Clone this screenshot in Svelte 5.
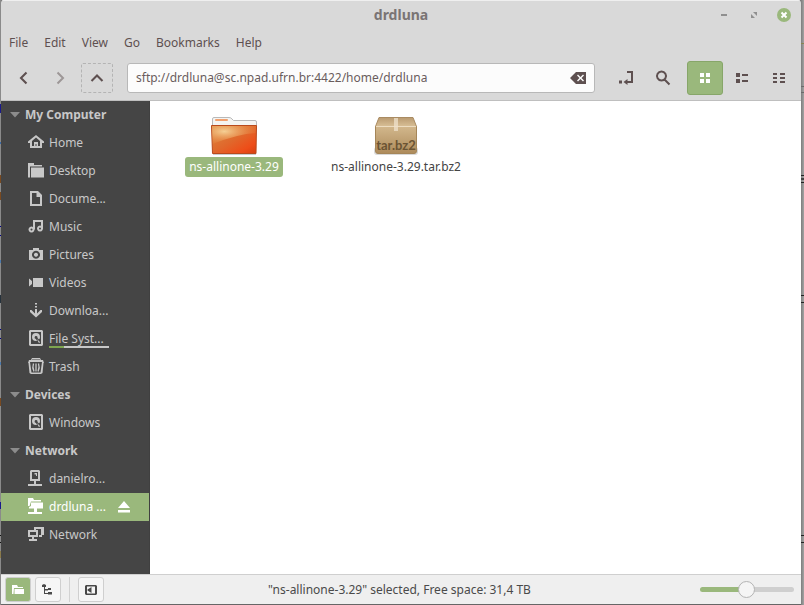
<script>
  const groups = [
    {
      title: 'My Computer',
      places: [
        { name: 'Home', icon: 'home' },
        { name: 'Desktop', icon: 'folder' },
        { name: 'Docume...', icon: 'document' },
        { name: 'Music', icon: 'music' },
        { name: 'Pictures', icon: 'camera' },
        { name: 'Videos', icon: 'video' },
        { name: 'Downloa...', icon: 'download' },
        { name: 'File Syst...', icon: 'disk', used: 25 },
        { name: 'Trash', icon: 'trash' }
      ]
    },
    { title: 'Devices', places: [{ name: 'Windows', icon: 'disk' }] },
    {
      title: 'Network',
      places: [
        { name: 'danielro...', icon: 'server' },
        { name: 'drdluna ...', icon: 'remote', mounted: true },
        { name: 'Network', icon: 'network' }
      ]
    }
  ];
  const menus = ['File', 'Edit', 'View', 'Go', 'Bookmarks', 'Help'];

  // Filled shapes (f) and stroked shapes (s) on a 16x16 grid
  const icons = {
    home: { f: 'M8 1 16 7.500V9H14V14H2V9H0V7.500ZM8 3.500 4 7V12H6V8H10V12H12V7ZM7.500 10H8.500V12H7.500Z' },
    folder: { f: 'M0 1H6V3H14V4.500H2V15.500H0ZM3 5.500H16V15.500H3Z' },
    document: { f: 'M2 1H10L14 5V16H2ZM4 3V14H12V7H8.500V3Z' },
    music: { s: 'M6 11.500V3H14V10.500M3.500 9.500A2 2 0 1 0 3.510 9.500ZM12 8.500A2 2 0 1 0 12.010 8.500Z', w: 2 },
    camera: { f: 'M5 2H11V4H15V14H1V4H5ZM8 4.800A4 4 0 1 0 8.010 4.800ZM8 6.800A2 2 0 1 1 7.990 6.800Z' },
    video: { f: 'M5 4H15V13H5ZM1 4.500 4 7V10L1 12.500Z' },
    download: { f: 'M7 1H9V2.500H7ZM7 4H9V5.500H7ZM7 7H9V11.500L12.500 8H14V10L8 15.500 2 10V8H3.500L7 11.500Z' },
    disk: { f: 'M2 0H14L15 1V15L14 16H2L1 15V1ZM3 2V14H13V2ZM8 3A4 4 0 0 1 12 7Q12 8.500 11 9.500L9.500 8A1.500 1.500 0 1 0 8 9L9 11H8A4 4 0 0 1 8 3ZM9 9 12 12 11.500 13 10.500 12.500Z' },
    trash: { f: 'M4 0H12L13 2H15L16 5H15.500L14.500 15 13 16H3L1.500 15 .5 5H0L1 2H3ZM2 4 3.500 14.500H12.500L14 4ZM4 1.500V2H12V1.500Z', s: 'M5.500 5.500Q4 9.500 6 13.500M8 5.500V13.500M10.500 5.500Q12 9.500 10 13.500', w: 1.3 },
    server: { f: 'M3 0H11L12 1V11H8V14H14V16H0V14H6V11H2V1ZM4 2V9H10V2ZM6.500 3H9V6H8V4.500H6.500Z' },
    remote: { f: 'M0 0H5L6 2H13V3.500H3L1.500 8H0ZM3 4.500H15V10.500H9V14H14V16H0V14H6V10.500H1V9L3 8Z' },
    network: { f: 'M6 1H16V9H14V11H11V9H13V3H8V4H6ZM0 4H10V11H6V13H9V15H1V13H4V11H0ZM2 6V9H8V6Z' },
    eject: { f: 'M8 2 14 9H2ZM2 11H14V13.500H2Z' },
    back: { s: 'M10.500 2.500 5 8 10.500 13.500', w: 2.100 },
    forward: { s: 'M5.500 2.500 11 8 5.500 13.500', w: 2 },
    up: { s: 'M2.500 11 8 5.500 13.500 11', w: 2.100 },
    clear: { f: 'M6 2H16V14H6L0 8ZM7 5.500 9.500 8 7 10.500 8 11.500 10.500 9 13 11.500 14 10.500 11.500 8 14 5.500 13 4.500 10.500 7 8 4.500Z' },
    toggle: { f: 'M9 1H15V13H9.500V15L5.500 12 9.500 9V11H13V3H9ZM1 10.500H4V13.500H1Z' },
    search: { s: 'M6.500 1.500A4.500 4.500 0 1 0 6.510 1.500ZM10 10 14.500 14.500', w: 2 },
    grid: { f: 'M3 3H7V7H3ZM9 3H13V7H9ZM3 9H7V13H3ZM9 9H13V13H9Z' },
    list: { f: 'M2 3H6V7H2ZM8 4H14V6H8ZM2 9H6V13H2ZM8 10H14V12H8Z' },
    compact: { f: 'M2 3H6V5H2ZM9 3H14V5H9ZM2 7H6V9H2ZM9 7H14V9H9ZM2 11H6V13H2ZM9 11H14V13H9Z' },
    places: { f: 'M2 3H7L8 5H13V6H4L3.500 12H2ZM4.500 7H14V12H4.500Z' },
    tree: { f: 'M2 3 4 2 6 3V5H5V7H8V6H11V8H8V8.500H5V11H8V10H12V12.500H8V12H4V5H2Z' },
    panel: { f: 'M3 3H13L14 4V12L13 13H3L2 12V4ZM4 4.500V11.500H12V4.500ZM8.500 5V11L4.500 8.500V7.500Z' },
    minimize: { f: 'M5 7H11V9H5Z' },
    maximize: { f: 'M7 5H11V9ZM5 7V11H9Z' }
  };

  // Glimpses of the page behind the window: offset, height, colour
  const leftSpecks = [
    [104, 9, '#1a1a8c'], [142, 2, '#3a6aa8'], [175, 8, '#7a4a20'], [192, 8, '#7a4a20'],
    [226, 1, '#00008c'], [235, 1, '#00008c'], [260, 3, '#4a7ab0'], [295, 8, '#26323c'],
    [329, 1, '#00008c'], [338, 1, '#00008c'], [362, 3, '#4a7ab0'], [398, 8, '#7a4a20'],
    [502, 7, '#1a1a8c'], [535, 1, '#111'], [542, 1, '#111'], [551, 7, '#8a7a4a']
  ];
  const rightSpecks = [
    [43, 1, '#8a8450'], [86, 1, '#6a6a6a'], [92, 1, '#6a6a6a'],
    [175, 1, '#222'], [178, 2, '#444'], [182, 1, '#222'],
    [295, 1, '#222'], [302, 1, '#222'], [535, 1, '#222'], [542, 1, '#222']
  ];
</script>

{#snippet icon(name)}
  <svg class="icon" viewBox="0 0 16 16" aria-hidden="true">
    {#if icons[name].f}<path d={icons[name].f} fill="currentColor" fill-rule="evenodd" />{/if}
    {#if icons[name].s}<path d={icons[name].s} fill="none" stroke="currentColor" stroke-width={icons[name].w} />{/if}
  </svg>
{/snippet}

{#snippet edge(side, specks)}
  <svg class="edge {side}" aria-hidden="true">
    {#each specks as [y, height, fill]}<rect x="0" {y} width="100%" {height} {fill} />{/each}
  </svg>
{/snippet}

<div class="backdrop">
  {@render edge('left', leftSpecks)}
  {@render edge('right', rightSpecks)}
  <div class="window">
    <header>
      <div class="titlebar">
        <h1>drdluna</h1>
        <div class="controls">
          <button aria-label="Minimize">{@render icon('minimize')}</button>
          <button aria-label="Maximize">{@render icon('maximize')}</button>
          <button aria-label="Close">
            <svg class="icon" viewBox="0 0 16 16"><circle cx="8" cy="8" r="7" fill="#9ab87c" /><path d="M5.500 5.500 10.500 10.500M10.500 5.500 5.500 10.500" stroke="#fff" stroke-width="2" /></svg>
          </button>
        </div>
      </div>
      <nav class="menubar">
        {#each menus as menu}<button>{menu}</button>{/each}
      </nav>
      <div class="toolbar">
        <div class="history">
          <button aria-label="Back">{@render icon('back')}</button>
          <button aria-label="Forward" disabled>{@render icon('forward')}</button>
          <button class="up" aria-label="Up">{@render icon('up')}</button>
        </div>
        <div class="location">
          <input type="text" aria-label="Location" value="sftp://drdluna@sc.npad.ufrn.br:4422/home/drdluna" />
          <button aria-label="Clear">{@render icon('clear')}</button>
        </div>
        <div class="tools">
          <button aria-label="Toggle location entry">{@render icon('toggle')}</button>
          <button aria-label="Search">{@render icon('search')}</button>
        </div>
        <div class="views">
          <button class="active" aria-label="Icon view">{@render icon('grid')}</button>
          <button aria-label="List view">{@render icon('list')}</button>
          <button aria-label="Compact view">{@render icon('compact')}</button>
        </div>
      </div>
    </header>

    <div class="body">
      <aside>
        {#each groups as group}
          <h2><svg viewBox="0 0 10 6" aria-hidden="true"><path d="M0 0H10L5 5.500Z" fill="#8c8c8c" /></svg>{group.title}</h2>
          <ul>
            {#each group.places as place}
              <li class:selected={place.mounted}>
                <a href="#place">{@render icon(place.icon)}<span>{place.name}</span></a>
                {#if place.mounted}<button aria-label="Eject">{@render icon('eject')}</button>{/if}
                {#if place.used}<div class="usage"><div style="width: {place.used}%"></div></div>{/if}
              </li>
            {/each}
          </ul>
        {/each}
      </aside>

      <main>
        <button class="file selected">
          <svg viewBox="0 0 48 40" aria-hidden="true">
            <defs>
              <linearGradient id="front" x1="0" y1="0" x2="1" y2="1"><stop offset="0" stop-color="#dc8a40" /><stop offset=".5" stop-color="#e0682c" /><stop offset=".8" stop-color="#ee4d18" /><stop offset="1" stop-color="#d5400f" /></linearGradient>
              <radialGradient id="shine" cx=".28" cy=".3" r=".8"><stop offset="0" stop-color="#f6d49a" stop-opacity=".95" /><stop offset="1" stop-color="#e88a40" stop-opacity=".1" /></radialGradient>
            </defs>
            <path d="M2.500 12V2Q2.500.5 4 .5H19Q21 .5 22 2L23.500 3.500H45Q46.500 3.500 46.500 5V12Z" fill="#f4f4f2" stroke="#b9b9b9" />
            <rect x="5" y="2" width="13" height="2" rx="1" fill="#f2a06e" />
            <path d="M1.500 8.500H46.500L46 36.500H2.500Z" fill="url(#front)" stroke="#b94a1c" />
            <path d="M2 9H46L45.500 16Q28 17 2.500 27Z" fill="url(#shine)" />
            <path d="M3 37.500H46" stroke="#000" stroke-opacity=".2" />
          </svg>
          <span>ns-allinone-3.29</span>
        </button>
        <button class="file">
          <svg viewBox="0 0 48 40" aria-hidden="true">
            <defs>
              <linearGradient id="box" x1="0" y1="0" x2="0" y2="1"><stop offset="0" stop-color="#d2b78c" /><stop offset="1" stop-color="#ad8b5b" /></linearGradient>
              <linearGradient id="lid" x1="0" y1="0" x2="0" y2="1"><stop offset="0" stop-color="#b99a70" /><stop offset="1" stop-color="#d8bf96" /></linearGradient>
            </defs>
            <rect x="2" y="30" width="44" height="8" rx="3" fill="#000" opacity=".15" />
            <path d="M7 .5H41L44.500 9.500H3.500Z" fill="url(#lid)" stroke="#a98b62" />
            <path d="M3.500 9.500H44.500V34Q44.500 36.500 42 36.500H6Q3.500 36.500 3.500 34Z" fill="url(#box)" stroke="#a58659" />
            <path d="M4 9.500H44" stroke="#eddcc0" />
            <path d="M22 1H26V14H22Z" fill="#efe2cc" opacity=".75" />
            <text x="24" y="33" text-anchor="middle">tar.bz2</text>
          </svg>
          <span>ns-allinone-3.29.tar.bz2</span>
        </button>
      </main>
    </div>

    <footer>
      <div class="panes">
        <button class="active" aria-label="Places">{@render icon('places')}</button>
        <button aria-label="Tree">{@render icon('tree')}</button>
        <i></i>
        <button aria-label="Hide sidebar">{@render icon('panel')}</button>
      </div>
      <p>"ns-allinone-3.29" selected, Free space: 31,4 TB</p>
      <div class="zoom"><input type="range" aria-label="Zoom" value="49" /></div>
    </footer>
  </div>
</div>

<style>
  :global(body) {
    margin: 0;
  }
  * {
    box-sizing: border-box;
  }
  .backdrop {
    position: relative;
    height: 100vh;
    padding: 0 3px 1px 1px;
    background: #666;
    font: 12px/16px 'Noto Sans', sans-serif;
    color: #4a4a4a;
  }
  .edge {
    position: absolute;
    top: 0;
    height: 100%;
  }
  .edge.left {
    left: 0;
    width: 1px;
    background: #8a8a8a;
  }
  .edge.right {
    right: 0;
    width: 3px;
    background: linear-gradient(to right, #7c7c7c, #a4a4a4);
  }
  .window {
    height: 100%;
    display: flex;
    flex-direction: column;
    border-radius: 3px 3px 0 0;
    overflow: hidden;
    background: #d9d9d9;
  }
  button {
    display: flex;
    align-items: center;
    justify-content: center;
    padding: 0;
    border: 0;
    background: none;
    font: inherit;
    color: inherit;
  }
  .icon {
    flex: none;
    display: block;
    width: 16px;
    height: 16px;
  }
  header {
    flex: none;
    border-top: 1px solid #efefef;
    border-bottom: 1px solid #bfbfbf;
    color: #5e5050;
  }
  .titlebar {
    display: grid;
    grid-template-columns: 1fr auto 1fr;
    align-items: center;
    height: 27px;
  }
  h1 {
    grid-column: 2;
    margin: 0;
    font-size: 14px;
    line-height: 20px;
    color: #7a7474;
  }
  .controls {
    display: flex;
    justify-content: flex-end;
    gap: 14px;
    padding-right: 9px;
    color: #8f8f8f;
  }
  .menubar {
    display: flex;
    gap: 16px;
    height: 28px;
    padding: 2px 0 0 8px;
  }
  .toolbar {
    display: flex;
    align-items: center;
    height: 44px;
    padding: 0 4px 0 5px;
  }
  .history {
    display: flex;
  }
  .history button {
    width: 36px;
    height: 30px;
  }
  .history button:disabled {
    color: #9d9797;
  }
  .history .up {
    width: 32px;
    margin-left: 3px;
    border: 1px dashed #b4b4b4;
    border-radius: 2px;
  }
  .location {
    flex: 1;
    display: flex;
    align-items: center;
    height: 30px;
    margin: 0 13px 0 14px;
    padding: 0 8px;
    border: 1px solid #b8b8b8;
    border-radius: 3px;
    background: #fcfcfc;
  }
  .location input {
    flex: 1;
    min-width: 0;
    padding: 0;
    border: 0;
    outline: 0;
    background: none;
    font: inherit;
    color: #6a5d5d;
  }
  .tools,
  .views {
    display: flex;
    gap: 1px;
  }
  .tools {
    margin-right: 6px;
  }
  .tools button,
  .views button {
    width: 36px;
    height: 34px;
  }
  .views .active {
    border: 1px solid #87a669;
    border-radius: 3px;
    background: #9ab87c;
    color: #fff;
  }
  .body {
    flex: 1;
    min-height: 0;
    display: flex;
    background: #fff;
  }
  aside {
    width: 149px;
    flex: none;
    border-right: 1px solid #404040;
    background: #454545;
    color: #c8c8c8;
  }
  h2,
  li {
    height: 28px;
    display: flex;
    align-items: center;
  }
  h2 {
    gap: 5px;
    margin: 0;
    padding-left: 9px;
    font-size: 12px;
    line-height: 16px;
  }
  h2 svg {
    width: 10px;
    height: 6px;
  }
  ul {
    margin: 0;
    padding: 0;
    list-style: none;
  }
  li {
    position: relative;
    padding: 0 0 2px 27px;
  }
  li a {
    display: flex;
    align-items: center;
    gap: 5px;
    color: inherit;
    text-decoration: none;
  }
  li span {
    padding-top: 2px;
  }
  li.selected {
    background: #9ab87c;
    color: #fff;
  }
  li button {
    margin: 2px 17px 0 auto;
  }
  .usage {
    position: absolute;
    left: 48px;
    right: 40px;
    bottom: 5px;
    height: 2px;
    background: #c8c8c8;
  }
  .usage div {
    height: 100%;
    background: #7fa650;
  }
  main {
    flex: 1;
    display: flex;
    align-items: flex-start;
    flex-wrap: wrap;
    padding: 16px 3px;
    color: #444;
  }
  .file {
    width: 162px;
    flex-direction: column;
  }
  .file svg {
    width: 48px;
    height: 40px;
  }
  .file span {
    padding: 2px 4px;
    border-radius: 3px;
  }
  .file.selected span {
    background: #9ab87c;
    color: #fff;
  }
  .file text {
    font: bold 13px Lato, sans-serif;
    fill: #6b5433;
  }
  footer {
    flex: none;
    display: grid;
    grid-template-columns: 1fr auto 1fr;
    align-items: center;
    height: 30px;
    padding: 0 7px 0 4px;
    border-top: 1px solid #cfcfcf;
    background: #efefef;
  }
  .panes {
    display: flex;
    gap: 4px;
  }
  .panes button {
    width: 26px;
    height: 25px;
    border: 1px solid #cfcfcf;
    border-radius: 3px;
    background: #f6f6f6;
  }
  .panes .active {
    background: #9ab87c;
    color: #fff;
  }
  .panes i {
    width: 1px;
    margin: 0 4px;
    background: #d2d2d2;
  }
  footer p {
    margin: 0;
  }
  .zoom {
    display: flex;
    justify-content: flex-end;
  }
  .zoom input {
    appearance: none;
    width: 94px;
    height: 17px;
    margin: 0;
    background: none;
  }
  .zoom input::-webkit-slider-runnable-track {
    height: 5px;
    border-radius: 3px;
    background: linear-gradient(to right, #9ab87c 49%, #cfcfcf 49%);
  }
  .zoom input::-webkit-slider-thumb {
    appearance: none;
    width: 17px;
    height: 17px;
    margin-top: -6px;
    border: 1px solid #b4b4b4;
    border-radius: 50%;
    background: #f5f5f5;
  }
</style>
